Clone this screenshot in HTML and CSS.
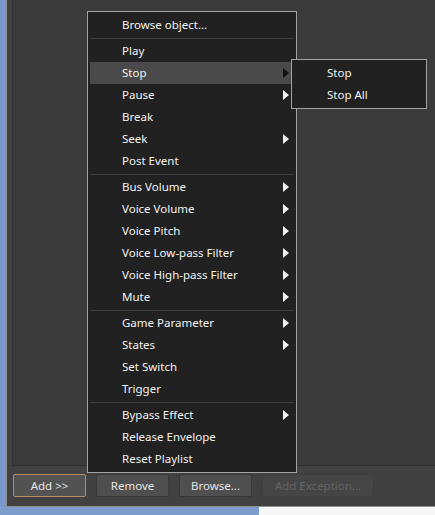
FILE: index.html
```html
<!DOCTYPE html>
<html>
<head>
<meta charset="utf-8">
<link rel="stylesheet" href="styles.css">
</head>
<body>
<div class="screen">
  <div class="window">
    <div class="pane"></div>
    <div class="buttons">
      <button class="btn btn-default">Add &gt;&gt;</button>
      <button class="btn">Remove</button>
      <button class="btn">Browse...</button>
      <button class="btn btn-wide btn-disabled">Add Exception...</button>
    </div>
  </div>
  <div class="taskbar"><div class="tb-blue"></div><div class="tb-white"></div></div>

  <div class="menu">
    <div class="item">Browse object...</div>
    <div class="sep"></div>
    <div class="item">Play</div>
    <div class="item active">Stop<span class="arrow"></span></div>
    <div class="item">Pause<span class="arrow"></span></div>
    <div class="item">Break</div>
    <div class="item">Seek<span class="arrow"></span></div>
    <div class="item">Post Event</div>
    <div class="sep"></div>
    <div class="item">Bus Volume<span class="arrow"></span></div>
    <div class="item">Voice Volume<span class="arrow"></span></div>
    <div class="item">Voice Pitch<span class="arrow"></span></div>
    <div class="item">Voice Low-pass Filter<span class="arrow"></span></div>
    <div class="item">Voice High-pass Filter<span class="arrow"></span></div>
    <div class="item">Mute<span class="arrow"></span></div>
    <div class="sep"></div>
    <div class="item">Game Parameter<span class="arrow"></span></div>
    <div class="item">States<span class="arrow"></span></div>
    <div class="item">Set Switch</div>
    <div class="item">Trigger</div>
    <div class="sep"></div>
    <div class="item">Bypass Effect<span class="arrow"></span></div>
    <div class="item">Release Envelope</div>
    <div class="item">Reset Playlist</div>
  </div>

  <div class="menu submenu">
    <div class="item">Stop</div>
    <div class="item">Stop All</div>
  </div>
</div>
</body>
</html>
```
FILE: styles.css
```css
html, body {
  margin: 0;
  padding: 0;
  background: #7a9acb;
}
* { box-sizing: border-box; }

.screen {
  position: relative;
  width: 435px;
  height: 515px;
  overflow: hidden;
  display: flex;
  flex-direction: column;
  background: #7a9acb;
  font-family: "Noto Sans", "Open Sans", sans-serif;
  font-size: 11.5px;
}

.window {
  margin-left: 6px;
  height: 507px;
  border-left: 1px solid #8e8e8e;
  border-bottom: 1px solid #8e8e8e;
  background: #414141;
  padding-left: 5px;
  display: flex;
  flex-direction: column;
}

.pane {
  height: 466px;
  flex: 0 0 466px;
  background: #3a3a3a;
  border-left: 1px solid #333333;
  border-bottom: 1px solid #2f2f2f;
}

.buttons {
  display: flex;
  gap: 10px;
  padding-top: 8px;
  padding-left: 1px;
}

.btn {
  width: 73px;
  height: 23px;
  margin: 0;
  padding: 0;
  font-family: inherit;
  font-size: 11.5px;
  color: #e4e4e4;
  background: #4f4f4f;
  border: 1px solid #383838;
  border-radius: 2px;
  line-height: 20px;
}
.btn-default {
  background: #525252;
  border-color: #b48c66;
}
.btn-wide { width: 112px; }
.btn-disabled {
  background: #454545;
  border-color: #3f3f3f;
  color: #646464;
}

.taskbar {
  display: flex;
  height: 8px;
}
.tb-blue { width: 259px; background: #7d9dcd; }
.tb-white { flex: 1; background: #f7f7f7; }

.menu {
  position: absolute;
  left: 87px;
  top: 11px;
  width: 210px;
  height: 462px;
  background: #212121;
  border: 1px solid #a3a3a3;
  padding: 2px;
  color: #f2f2f2;
}

.item {
  height: 22px;
  line-height: 22px;
  padding-left: 32px;
  display: flex;
  align-items: center;
  white-space: nowrap;
}
.item.active { background: #4a4a4a; }

.arrow {
  margin-left: auto;
  margin-right: 5px;
  width: 0;
  height: 0;
  border-left: 6px solid #f2f2f2;
  border-top: 5.5px solid transparent;
  border-bottom: 5.5px solid transparent;
}
.item.active .arrow { border-left-color: #111111; }

.sep {
  height: 1px;
  margin: 2px 0 1px;
  background: #3e3e3e;
}

.submenu {
  left: 291px;
  top: 59px;
  width: 136px;
  height: 50px;
}
.submenu .item { padding-left: 33px; }
```
